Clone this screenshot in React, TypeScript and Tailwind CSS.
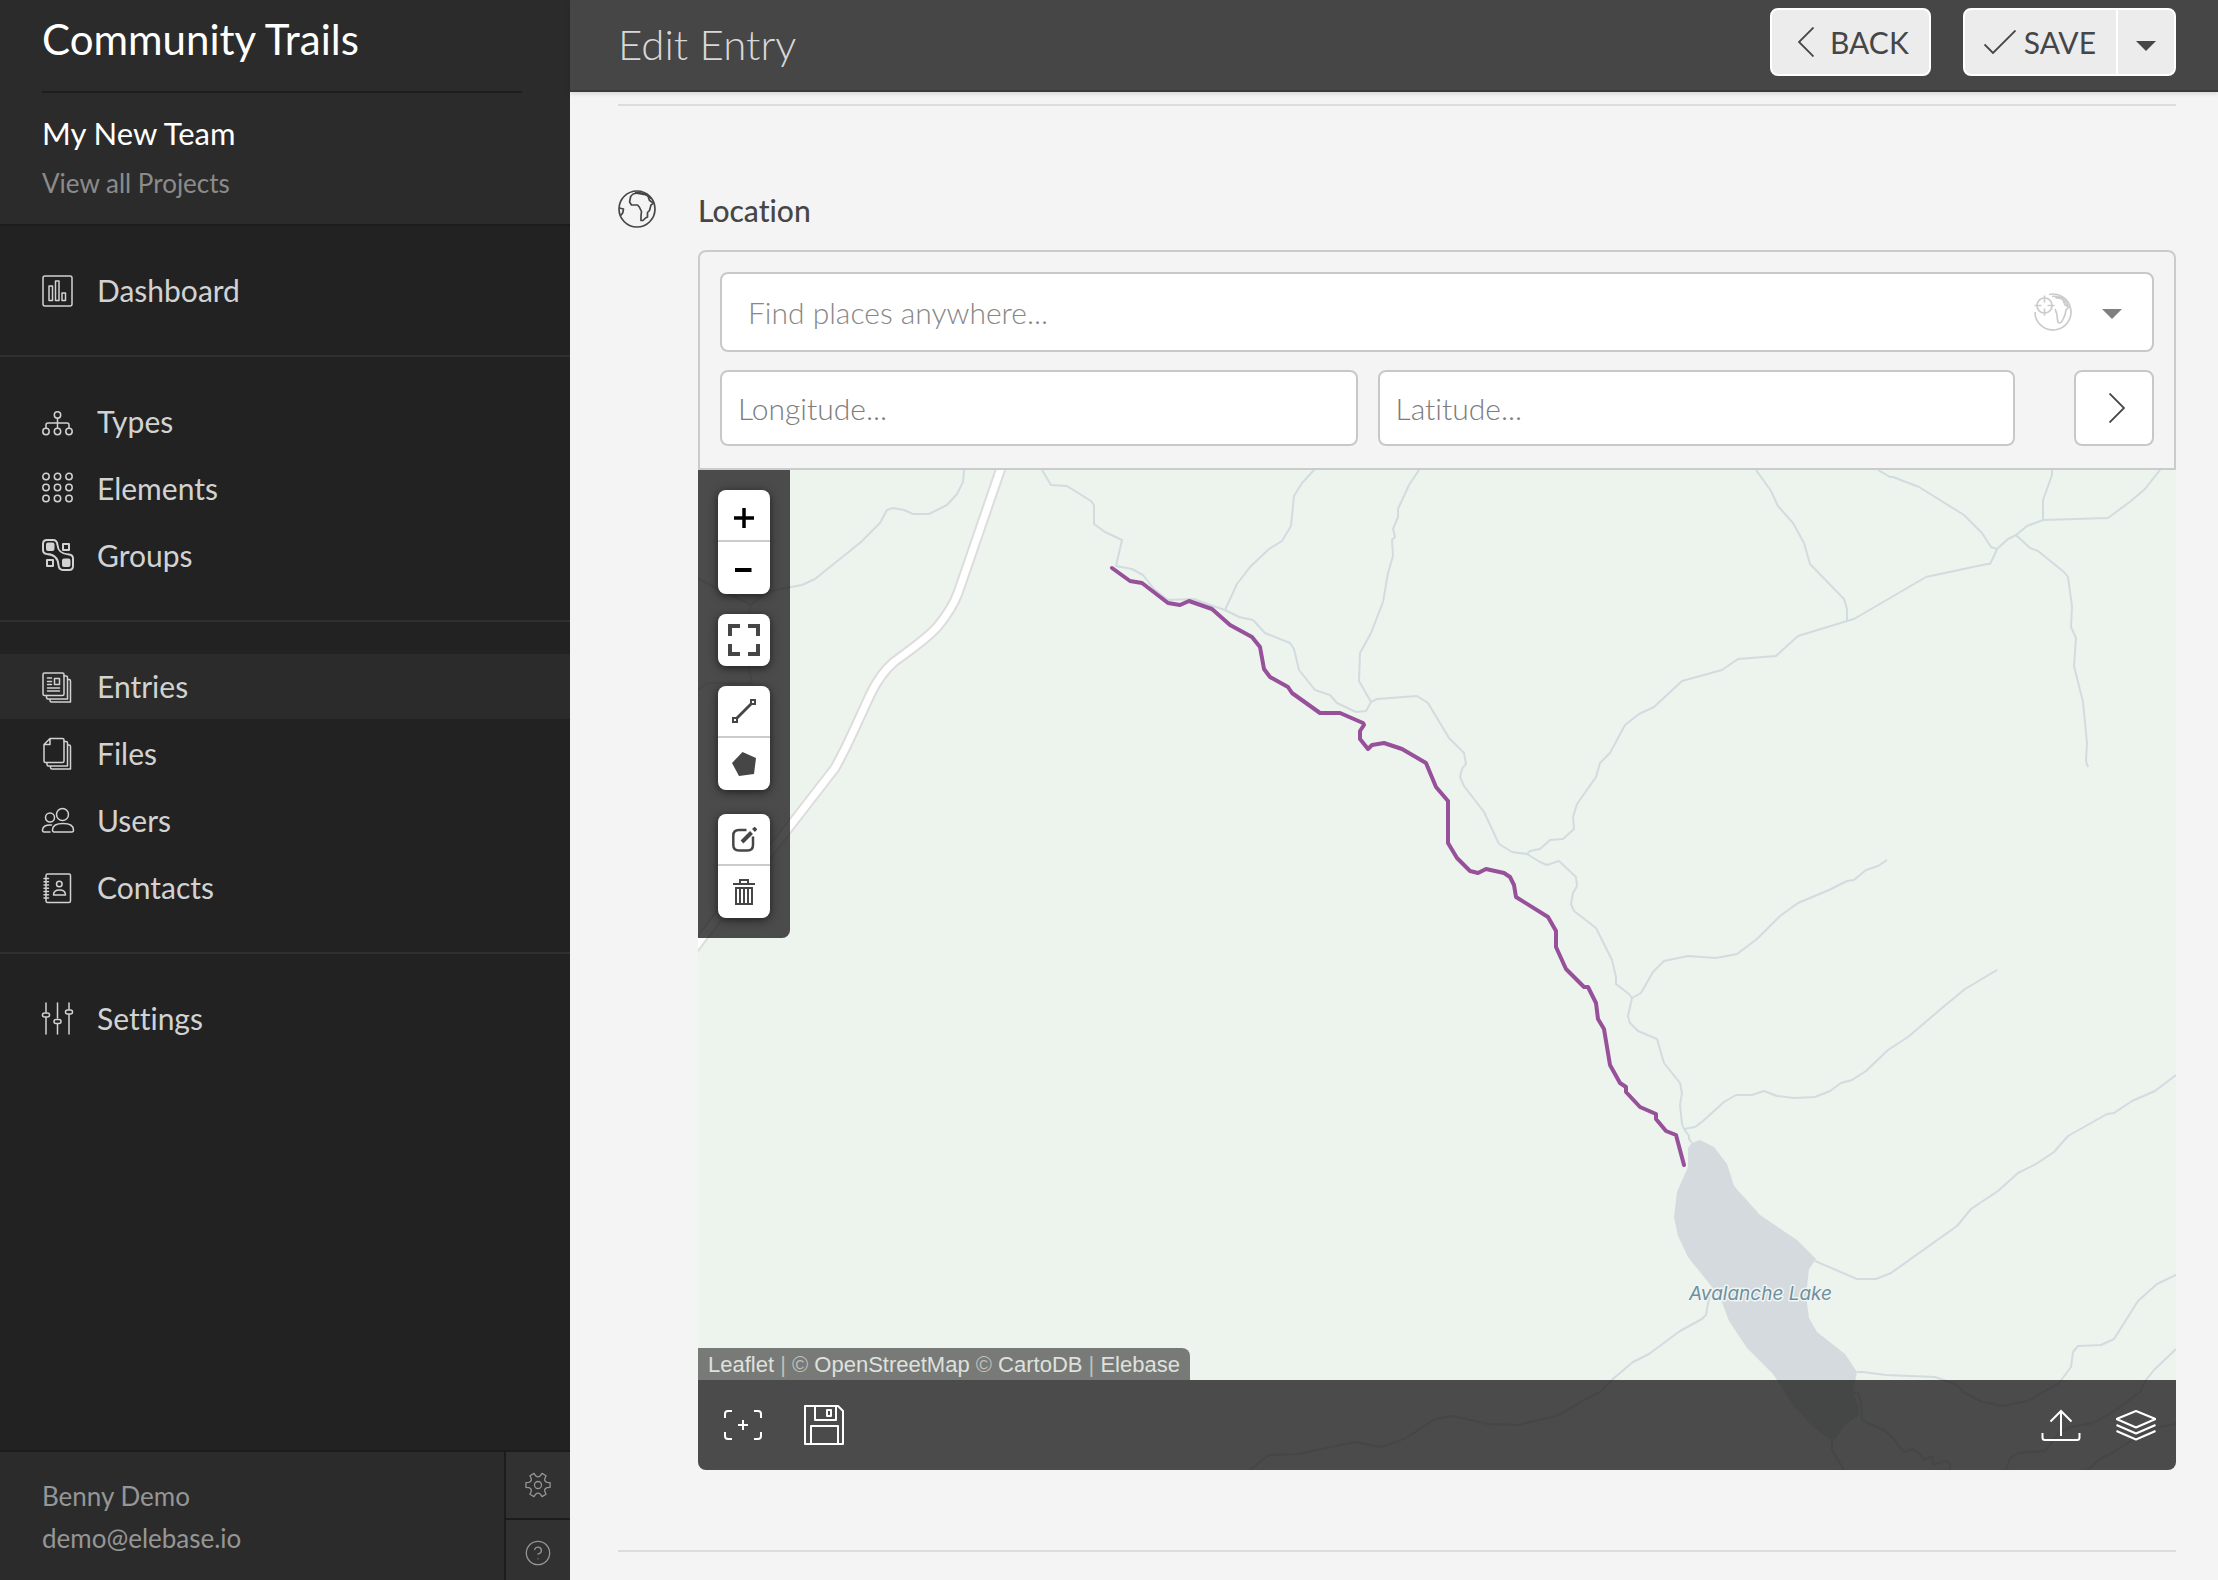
import React from 'react';
import { CircleHelp } from 'lucide-react';

type IconProps = { className?: string; children: React.ReactNode };

const NavIcon: React.FC<IconProps> = ({ className, children }) => (
  <svg
    viewBox="0 0 32 32"
    className={`size-8 shrink-0 overflow-visible ${className ?? ''}`}
    fill="none"
    stroke="currentColor"
    strokeWidth="1.5"
    strokeLinecap="round"
    strokeLinejoin="round"
    aria-hidden="true"
  >
    {children}
  </svg>
);

const columns = [4, 15.5, 27];

const icons: Record<string, React.ReactNode> = {
  Dashboard: (
    <>
      <rect x="1" y="1" width="29" height="30" rx="2" />
      <rect x="7" y="11" width="3.5" height="14.5" />
      <rect x="13.5" y="6" width="3.5" height="19.5" />
      <rect x="20" y="18" width="3.5" height="7.5" />
    </>
  ),
  Types: (
    <>
      <circle cx="15.5" cy="9" r="3.2" />
      {columns.map((x) => <circle key={x} cx={x} cy="25.5" r="3.2" />)}
      <path d="M15.5 12.5v9.5M4 22v-3q0-2 2-2h19q2 0 2 2v3" />
    </>
  ),
  Elements: (
    <>
      {[3.5, 14.5, 25.5].map((y) =>
        columns.map((x) => <circle key={`${x}-${y}`} cx={x} cy={y} r="3.2" />)
      )}
    </>
  ),
  Groups: (
    <g strokeWidth="2">
      <path d="M5 0h6q4 0 4.500 5C16 11 19 14 27 14.500q4 .5 4 4V26q0 4-4 4h-6q-4 0-4.500-5C16 18 12 14.500 5 14q-4-.5-4-4V4q0-4 4-4z" />
      <rect x="5" y="3.500" width="6.500" height="6.500" rx="1" fill="currentColor" />
      <rect x="21" y="19.500" width="6.500" height="6.500" rx="1" fill="currentColor" />
      <rect x="21" y="4" width="6" height="6" />
      <rect x="5" y="20" width="6" height="6" />
    </g>
  ),
  Entries: (
    <>
      <rect x="1" y="2" width="21" height="22.500" rx="1.500" />
      <path d="M22 5h2q1.500 0 1.500 1.500V28H6q-1.500 0-1.500-1.500V24.500M25.500 8.500h1.500q1.500 0 1.500 1.500V31H9.500Q8 31 8 29.500V28" />
      <path d="M5.500 7h4M5.500 10.500h4M5.500 13.500h4M5.500 17h12M5.500 20h12M12.500 7.500h5v6h-5z" />
    </>
  ),
  Files: (
    <>
      <path d="M8 .5h12.500q1.500 0 1.500 1.500v21q0 1.500-1.500 1.500H3.500Q2 24.500 2 23V6.500zM8 .5v6H2" />
      <path d="M22 3.500h2q1.500 0 1.500 1.500V28H6.500Q5 28 5 26.500v-2M25.500 7h1.500q1.500 0 1.500 1.500V31H10q-1.500 0-1.500-1.500V28" />
    </>
  ),
  Users: (
    <>
      <circle cx="20.500" cy="9.500" r="6" />
      <circle cx="8" cy="12.500" r="4.500" />
      <path d="M12 27h18q1.500 0 1.500-2c0-4-4-6.500-10.500-6.500S10.500 21 10.500 25q0 2 1.500 2zM9.500 20C4 19.500.5 21.500.5 25q0 2 1.500 2h6" />
    </>
  ),
  Contacts: (
    <>
      <rect x="4" y="2" width="24.500" height="28.500" rx="1.500" />
      <path d="M2 6.500h4.500M2 9.700h4.500M2 13h4.500M2 16.200h4.500M2 19.500h4.500M2 22.700h4.500M2 26h4.500" />
      <circle cx="17.300" cy="12" r="2.800" />
      <path d="M11.500 23q0-5 6-5t6 5z" />
    </>
  ),
  Settings: (
    <>
      <path d="M4 0v9M4 14.500V31M15.500 0v15M15.500 21v10M27 0v6M27 11.500V31" />
      <rect x=".5" y="10" width="7" height="4" rx="2" />
      <rect x="12" y="16.500" width="7" height="4" rx="2" />
      <rect x="23.500" y="7" width="7" height="4" rx="2" />
    </>
  ),
};

const navGroups = [
  ['Dashboard'],
  ['Types', 'Elements', 'Groups'],
  ['Entries', 'Files', 'Users', 'Contacts'],
  ['Settings'],
];

const point = (radius: number, degrees: number) => {
  const a = (degrees * Math.PI) / 180;
  return `${(13 + radius * Math.cos(a)).toFixed(2)} ${(13 + radius * Math.sin(a)).toFixed(2)}`;
};

// Six teeth with a curved valley between each pair
const gearPath =
  [0, 60, 120, 180, 240, 300]
    .map(
      (a, i) =>
        `${i === 0 ? 'M' : 'L'}${point(9.5, a - 16)}L${point(12.3, a - 11)}L${point(12.3, a + 11)}L${point(9.5, a + 16)}Q${point(7, a + 30)} ${point(9.5, a + 44)}`
    )
    .join('') + 'Z';

const Caret: React.FC<{ className?: string }> = ({ className }) => (
  <svg viewBox="0 0 20 10" className={`h-[10px] w-5 ${className ?? ''}`} aria-hidden="true">
    <path d="M0 0h20L10 10z" fill="currentColor" />
  </svg>
);

const Sidebar: React.FC = () => (
  <aside className="flex w-[570px] shrink-0 flex-col bg-[#222222] text-white">
    <div className="border-b-2 border-[#1c1c1c] bg-[#2b2b2b] pt-3.5 pr-12 pb-[25px] pl-[42px]">
      <h1 className="text-[42px] leading-[50px]">Community Trails</h1>
      <hr className="mt-[27px] border-t-2 border-[#1e1e1e]" />
      <p className="mt-[22px] text-[31px] leading-9">My New Team</p>
      <a href="#projects" className="mt-4 block text-[26px] leading-8 text-[#8b8b8b]">
        View all Projects
      </a>
    </div>
    <nav>
      {navGroups.map((group) => (
        <ul
          key={group[0]}
          className="flex flex-col gap-0.5 border-b-2 border-[#303030] py-8 last:border-b-0"
        >
          {group.map((name) => (
            <li key={name}>
              <a
                href={`#${name.toLowerCase()}`}
                className={`flex h-[65px] items-center gap-[23px] pl-[42px] text-[30px] text-[#d2d2d2] ${name === 'Entries' ? 'bg-[#2b2b2b]' : ''}`}
              >
                <NavIcon>{icons[name]}</NavIcon>
                {name}
              </a>
            </li>
          ))}
        </ul>
      ))}
    </nav>
    <div className="mt-auto flex border-t-2 border-[#1c1c1c] bg-[#2b2b2b] text-[#969696]">
      <div className="flex-1 pt-[23px] pl-[42px] text-[26px] leading-[42px]">
        <p>Benny Demo</p>
        <p>demo@elebase.io</p>
      </div>
      <div className="flex w-[66px] flex-col border-l-2 border-[#1c1c1c] bg-[#313131]">
        <button aria-label="Account settings" className="flex h-[68px] items-center justify-center border-b-2 border-[#1c1c1c]">
          <svg viewBox="0 0 26 26" className="size-[26px]" fill="none" stroke="currentColor" strokeWidth="1.3" strokeLinejoin="round">
            <path d={gearPath} />
            <circle cx="13" cy="13" r="3.500" />
          </svg>
        </button>
        <button aria-label="Help" className="flex h-[60px] items-start justify-center pt-[19px]">
          <CircleHelp size={28} strokeWidth={1.1} />
        </button>
      </div>
    </div>
  </aside>
);

const Header: React.FC = () => (
  <header className="relative flex h-[92px] items-start justify-between border-b-2 border-[#3a3a3a] bg-[#464646] pt-2 pr-[42px] pl-12 shadow-[0_2px_4px_rgba(0,0,0,0.12)]">
    <h2 className="mt-[11px] text-[42px] leading-[50px] font-light text-[#d8d8d8]">Edit Entry</h2>
    <div className="flex gap-8 text-[30px] text-[#464646]">
      <button className="flex h-[68px] items-center gap-4 rounded-lg border-2 border-white bg-[#ececec] pr-5 pl-[26px]">
        <svg viewBox="0 0 16 30" className="h-[30px] w-4" fill="none" stroke="currentColor" strokeWidth="1.8">
          <path d="M15.500.5L1 15l14.500 14.500" />
        </svg>
        BACK
      </button>
      <div className="flex h-[68px] rounded-lg border-2 border-white bg-[#ececec]">
        <button className="flex items-center gap-2 border-r-2 border-white pr-5 pl-[19px]">
          <svg viewBox="0 0 32 24" className="h-6 w-8" fill="none" stroke="currentColor" strokeWidth="1.8">
            <path d="M.5 14.500L9 23 31.500.5" />
          </svg>
          SAVE
        </button>
        <button aria-label="More save options" className="flex w-14 items-center justify-center pt-2">
          <Caret />
        </button>
      </div>
    </div>
  </header>
);

const LocationSearch: React.FC = () => (
  <div className="flex flex-col gap-[18px] rounded-t-lg border-2 border-[#cbcbcb] px-5 pt-5 pb-[22px]">
    <div className="flex h-20 items-center rounded-lg border-2 border-[#c8c8c8] bg-white">
      <input
        id="location"
        type="text"
        placeholder="Find places anywhere..."
        className="h-full min-w-0 flex-1 pl-[26px] text-[30px] font-light outline-none placeholder:text-[#878787]"
      />
      <button aria-label="Use my location" className="mr-[30px] text-[#cccccc]">
        <svg viewBox="0 0 38 38" className="size-[38px]" fill="none" stroke="currentColor" strokeWidth="1.7">
          <path d="M1 19a18 18 0 1 0 14-17.500" />
          <path d="M18 3.500c6-1 8 .5 11 2M21 4c4 3 5-1 8 3l2 5 4 2-3 3-1 5c-2 3-2 8-6 8-3-1 0-7-4-14M29 6c3 2 4 4 5 7" />
          <circle cx="10.500" cy="12.500" r="7.500" />
          <path d="M10.500 2.500v7M10.500 15.500v7M.5 12.500h7M13.500 12.500h7" />
        </svg>
      </button>
      <button aria-label="Show places" className="mr-[30px] pt-1 text-[#808080]">
        <Caret />
      </button>
    </div>
    <div className="flex h-[76px] gap-5">
      <input
        type="text"
        aria-label="Longitude"
        placeholder="Longitude..."
        className="min-w-0 flex-1 rounded-lg border-2 border-[#c8c8c8] bg-white px-4 text-[30px] font-light outline-none placeholder:text-[#7c7c7c]"
      />
      <input
        type="text"
        aria-label="Latitude"
        placeholder="Latitude..."
        className="min-w-0 flex-1 rounded-lg border-2 border-[#c8c8c8] bg-white px-4 text-[30px] font-light outline-none placeholder:text-[#7c7c7c]"
      />
      <button
        aria-label="Go to coordinates"
        className="ml-[39px] flex w-20 items-center justify-center rounded-lg border-2 border-[#c8c8c8] bg-white pl-1.5 text-[#464646]"
      >
        <svg viewBox="0 0 16 30" className="h-[30px] w-4" fill="none" stroke="currentColor" strokeWidth="1.8">
          <path d="M.5.5L15 15 .5 29.500" />
        </svg>
      </button>
    </div>
  </div>
);

const streams = [
  '344,0 353,15 369,16 393,31 396,35 396,54 407,62 424,70 418,96 434,99 445,105 456,119 470,130 496,129 515,136 527,140 541,147 555,150 567,163 592,173 596,179 601,200 617,220 632,225 639,233 658,242 668,241 673,232 679,229 719,226 730,233 751,268 766,283 768,294 764,299 762,307 766,316 786,342 801,374 814,382 829,384 842,392 849,395 861,391 878,407 879,416 875,423 873,434 876,441 898,458 914,490 918,507 918,514 931,524 934,528 930,546 932,553 940,561 959,569 966,593 982,613 984,623 982,635 984,654 986,659 991,666 991,669 994,673',
  '616,0 604,13 596,26 593,56 584,71 571,79 552,97 539,114 527,140',
  '721,0 711,15 700,39 700,47 695,59 697,67 694,70 695,86 690,103 685,132 673,163 662,183 661,211 673,232',
  '829,384 832,381 842,379 852,370 865,369 876,359 875,347 879,334 898,307 902,293 912,283 927,255 941,244 956,237 984,211 1024,200 1040,189 1078,186 1100,166 1149,151 1156,149 1228,107 1289,94 1292,94 1296,86 1299,79 1310,69 1318,65 1329,56 1345,50 1410,48 1433,31 1447,19 1462,0',
  '1058,0 1073,21 1080,36 1095,53 1106,73 1112,94 1146,129 1149,139 1149,151',
  '1180,0 1192,7 1195,7 1221,17 1266,45 1284,63 1293,77 1299,79',
  '1354,0 1354,5 1345,30 1345,50',
  '1318,65 1332,78 1340,81 1366,102 1370,107 1374,136 1373,157 1378,168 1376,196 1385,232 1389,273 1388,291 1390,297',
  '934,528 943,523 955,502 966,491 990,486 1018,488 1039,484 1059,469 1082,446 1100,433 1131,420 1149,411 1156,410 1168,400 1180,396 1189,390',
  '986,659 997,657 1005,651 1026,632 1038,625 1054,625 1066,621 1079,626 1096,628 1117,627 1132,621 1143,613 1154,610 1168,601 1190,580 1210,567 1244,538 1267,519 1299,500',
  '1117,791 1159,809 1178,809 1193,803 1259,756 1273,739 1300,721 1320,703 1338,694 1356,682 1370,666 1409,644 1416,643 1434,631 1457,621 1478,605',
  '1159,902 1165,902 1188,905 1237,907 1257,914 1267,923 1284,932 1305,936 1330,931 1361,913 1373,897 1375,882 1380,876 1403,875 1416,869 1440,831 1459,814 1478,805',
  '1478,879 1456,900 1448,910 1442,922 1418,940 1395,953 1373,957 1361,963 1347,981 1320,983 1312,988 1308,1000',
  '1478,954 1462,957 1450,960 1414,983 1405,987 1389,1000',
  '1154,923 1160,923 1163,932 1164,950 1186,960 1194,967 1206,982 1215,979 1221,983 1226,990 1234,986 1235,995 1247,991 1252,993 1252,1000',
  '1134,970 1134,980 1146,1000',
  '1014,818 1010,833 1008,845 1004,849 982,861 951,884 935,892 916,908 902,922 884,931 873,938 858,946 820,955 790,954 755,946 737,949 708,968 683,977 657,972 600,984 571,985 552,1000',
  '266,0 265,12 259,24 249,35 231,44 215,44 206,40 195,38 189,40 182,53 163,72 117,109 104,115 82,119 67,123 53,135 34,125 12,115 0,108',
  '53,135 51,143 49,190 54,213 25,213 9,213 0,220',
];

const lake =
  '1002,670 1016,677 1029,694 1036,716 1062,745 1099,770 1118,789 1111,799 1109,817 1109,833 1111,848 1119,862 1147,884 1159,902 1155,922 1161,938 1160,946 1147,955 1137,970 1131,969 1115,957 1095,935 1075,904 1049,878 1031,851 1024,832 1014,817 990,787 980,766 976,747 979,722 990,697 990,678 994,673';

const road =
  'M303-2L260 123Q254 139 240 156C229 169 209 182 196 192Q183 203 173 223L156 260Q147 280 137 298L75 378L20 447L-5 480';

const trail =
  '414,98 432,111 444,113 470,133 482,135 491,131 514,139 532,155 554,167 562,177 566,199 572,207 590,217 594,223 622,243 642,243 665,253 666,255 662,261 662,269 670,279 674,275 686,273 704,279 728,293 738,317 750,331 750,373 759,388 772,401 780,403 788,399 806,403 812,407 816,415 818,427 850,447 858,461 858,477 868,499 886,517 890,517 898,533 900,549 906,559 912,595 922,613 928,617 928,622 942,637 958,644 958,649 968,661 978,665 986,695';

const MapCanvas: React.FC = () => (
  <svg
    viewBox="0 0 1478 1000"
    preserveAspectRatio="xMinYMin slice"
    className="absolute inset-0 size-full bg-[#edf3ed]"
    fill="none"
    strokeLinejoin="round"
    role="img"
    aria-label="Map of the trail to Avalanche Lake"
  >
    <g stroke="#d2dce0" strokeWidth="2">
      {streams.map((points) => <polyline key={points} points={points} />)}
    </g>
    <polygon points={lake} fill="#d4dadd" />
    <path d={road} stroke="#dcdcdc" strokeWidth="11" />
    <path d={road} stroke="#ffffff" strokeWidth="7" />
    <polyline points={trail} stroke="#97509a" strokeWidth="4" strokeLinecap="round" />
    <text
      x="991"
      y="830"
      fill="#6f8f9d"
      stroke="#f0f5f3"
      strokeWidth="3"
      paintOrder="stroke"
      fontFamily="Inter, sans-serif"
      fontSize="19"
      fontStyle="italic"
    >
      Avalanche Lake
    </text>
  </svg>
);

const ToolGroup: React.FC<{ children: React.ReactNode }> = ({ children }) => (
  <div className="flex w-[52px] flex-col divide-y-2 divide-[#cccccc] overflow-hidden rounded-lg bg-white text-[#464646] shadow-[0_2px_10px_rgba(0,0,0,0.6)]">
    {children}
  </div>
);

const ToolButton: React.FC<{ label: string; className?: string; children: React.ReactNode }> = ({
  label,
  className,
  children,
}) => (
  <button aria-label={label} className={`flex h-[52px] items-center justify-center ${className ?? ''}`}>
    {children}
  </button>
);

const MapTools: React.FC = () => (
  <div className="absolute top-0 left-0 rounded-br-lg bg-[rgba(32,32,32,0.8)] p-5">
    <ToolGroup>
      <ToolButton label="Zoom in" className="pt-1.5 text-black">
        <svg viewBox="0 0 20 20" className="size-5" stroke="currentColor" strokeWidth="3.500">
          <path d="M0 10h20M10 0v20" />
        </svg>
      </ToolButton>
      <ToolButton label="Zoom out" className="pt-0.5 text-black">
        <svg viewBox="0 0 20 20" className="size-5" stroke="currentColor" strokeWidth="4">
          <path d="M1 11h16.500" />
        </svg>
      </ToolButton>
    </ToolGroup>
    <div className="h-5" />
    <ToolGroup>
      <ToolButton label="Full screen">
        <svg viewBox="0 0 32 32" className="size-8" fill="none" stroke="currentColor" strokeWidth="4">
          <path d="M12 2H2v10M20 2h10v10M12 30H2V20M20 30h10V20" />
        </svg>
      </ToolButton>
    </ToolGroup>
    <div className="h-5" />
    <ToolGroup>
      <ToolButton label="Draw a line">
        <svg viewBox="0 0 24 24" className="size-6" fill="none" stroke="currentColor" strokeWidth="2">
          <path d="M1 19h4v4H1zM19 1h4v4h-4z" />
          <path d="M5 19L19 5" strokeWidth="2.800" />
        </svg>
      </ToolButton>
      <ToolButton label="Draw a polygon">
        <svg viewBox="0 0 24 24" className="size-6" fill="currentColor">
          <path d="M10.500 0L24 6l-2 16-15 2L0 11z" />
        </svg>
      </ToolButton>
    </ToolGroup>
    <div className="h-6" />
    <ToolGroup>
      <ToolButton label="Edit layers">
        <svg viewBox="0 0 25 25" className="size-[25px]" fill="none" stroke="currentColor">
          <path d="M14.500 3H7Q1.300 3 1.300 8.500V18q0 5.500 5.700 5.500h8.500q5.500 0 5.500-5.500V9.500" strokeWidth="2.500" />
          <path d="M10 15L19.500 5.500" strokeWidth="4" />
          <path d="M21.500 3.500L24 1" strokeWidth="4" />
        </svg>
      </ToolButton>
      <ToolButton label="Delete layers">
        <svg viewBox="0 0 22 26" className="h-[26px] w-[22px]" fill="none" stroke="currentColor" strokeWidth="2">
          <path d="M0 5h22M7 5V1h8v4M3 9h16v16H3zM7 9v16M11 9v16M15 9v16" />
        </svg>
      </ToolButton>
    </ToolGroup>
  </div>
);

const Attribution: React.FC = () => (
  <p className="w-fit rounded-tr-lg bg-[#787a77] px-[10px] pt-0.5 font-['Liberation_Sans',Arial,sans-serif] text-[22px] leading-[30px] text-[#bdbfbc]">
    <a href="#leaflet" className="text-[#dfe1de]">Leaflet</a> | ©{' '}
    <a href="#osm" className="text-[#dfe1de]">OpenStreetMap</a> ©{' '}
    <a href="#cartodb" className="text-[#dfe1de]">CartoDB</a> |{' '}
    <a href="#elebase" className="text-[#dfe1de]">Elebase</a>
  </p>
);

const MapBar: React.FC = () => (
  <div className="flex h-[90px] items-center bg-[rgba(32,32,32,0.8)] pr-5 pl-[25px] text-white">
    <button aria-label="Fit to shape">
      <svg viewBox="0 0 40 32" className="h-8 w-10" fill="none" stroke="currentColor" strokeWidth="2">
        <path d="M2 9V5q0-3 3-3h4M31 2h4q3 0 3 3v4M2 23v4q0 3 3 3h4M31 30h4q3 0 3-3v-4M15 16h10M20 11v10" />
      </svg>
    </button>
    <button aria-label="Save view" className="ml-[41px]">
      <svg viewBox="0 0 40 40" className="size-10" fill="none" stroke="currentColor" strokeWidth="2" strokeLinejoin="round">
        <path d="M1 1h33l5 5v33H1zM11 1v14h21V1M7 39V21h27v18M23 5h4v6h-4z" />
      </svg>
    </button>
    <button aria-label="Upload" className="ml-auto">
      <svg viewBox="0 0 40 34" className="h-[34px] w-10" fill="none" stroke="currentColor" strokeWidth="2">
        <path d="M1.500 25v4.500q0 2.500 2.500 2.500h32q2.500 0 2.500-2.500V25M20 28V3M9.500 13.500L20 3l10.500 10.500" />
      </svg>
    </button>
    <button aria-label="Layers" className="ml-[35px]">
      <svg viewBox="0 0 40 32" className="h-8 w-10" fill="none" stroke="currentColor" strokeWidth="2" strokeLinejoin="round">
        <path d="M20 2l19.500 8L20 18.500.5 10zM.5 16L20 24.500 39.500 16M.5 22L20 30.500 39.500 22" />
      </svg>
    </button>
  </div>
);

const TrailMap: React.FC = () => (
  <div className="relative h-[1000px] overflow-hidden rounded-b-lg">
    <MapCanvas />
    <MapTools />
    <div className="absolute inset-x-0 bottom-0">
      <Attribution />
      <MapBar />
    </div>
  </div>
);

const App: React.FC = () => (
  <div className="flex min-h-screen bg-[#f4f4f4] font-[Lato,'Open_Sans',sans-serif] [font-variant-ligatures:none]">
    <Sidebar />
    <div className="min-w-0 flex-1">
      <Header />
      <main className="pt-3 pr-[42px] pl-12">
        <hr className="border-t-2 border-[#dcdcdc]" />
        <section className="flex gap-[42px] pt-[84px] pb-20">
          <svg viewBox="0 0 38 38" className="size-[38px] shrink-0 text-[#464646]" fill="none" stroke="currentColor" strokeWidth="1.7" strokeLinejoin="round" aria-hidden="true">
            <circle cx="19" cy="19" r="18" />
            <path d="M12.500 7C14 4 17 3 20 3.300s4 1 7 1.200l3 1.500 1.500 4.500L35.500 13 33 15l-1.500 5.500-2 2V27l-2 1-2.500 2.500h-2V26l.5-4.500-2.200-4.500-1.800-2h-6L11.600 12z" />
            <path d="M17 2.800c6-.8 12 1.200 16.500 6M1.300 18l4.200 1-.8 4-2 2.500" />
          </svg>
          <div className="min-w-0 flex-1">
            <label htmlFor="location" className="mb-5 block text-[30px] leading-10 font-medium text-[#464646]">
              Location
            </label>
            <LocationSearch />
            <TrailMap />
          </div>
        </section>
        <hr className="border-t-2 border-[#dcdcdc]" />
      </main>
    </div>
  </div>
);

export default App;
